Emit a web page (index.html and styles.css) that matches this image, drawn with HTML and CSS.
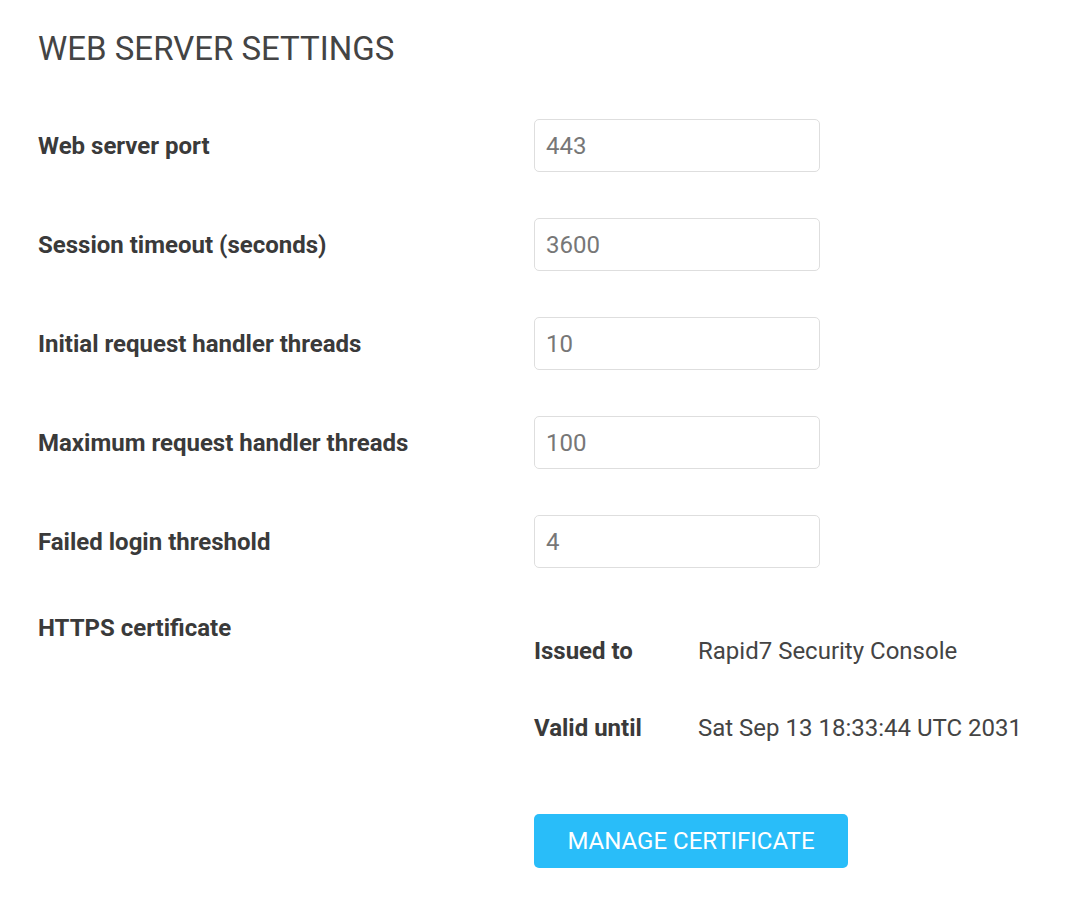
FILE: index.html
```html
<!DOCTYPE html>
<html>

<head>
    <meta charset="UTF-8">
    <title>Web Server Settings</title>
    <link rel="stylesheet" href="styles.css">
</head>

<body>
    <div class="settings">
        <h1 class="settings-title">WEB SERVER SETTINGS</h1>

        <div class="field-row">
            <label class="field-label" for="port">Web server port</label>
            <input class="field-input" id="port" type="text" value="443">
        </div>
        <div class="field-row">
            <label class="field-label" for="timeout">Session timeout (seconds)</label>
            <input class="field-input" id="timeout" type="text" value="3600">
        </div>
        <div class="field-row">
            <label class="field-label" for="initThreads">Initial request handler threads</label>
            <input class="field-input" id="initThreads" type="text" value="10">
        </div>
        <div class="field-row">
            <label class="field-label" for="maxThreads">Maximum request handler threads</label>
            <input class="field-input" id="maxThreads" type="text" value="100">
        </div>
        <div class="field-row">
            <label class="field-label" for="loginThreshold">Failed login threshold</label>
            <input class="field-input" id="loginThreshold" type="text" value="4">
        </div>

        <div class="cert-row">
            <div class="field-label">HTTPS certificate</div>
            <div class="cert-panel">
                <div class="cert-details">
                    <div class="cert-key">Issued to</div>
                    <div class="cert-value">Rapid7 Security Console</div>
                    <div class="cert-key">Valid until</div>
                    <div class="cert-value">Sat Sep 13 18:33:44 UTC 2031</div>
                </div>
                <button class="cert-button" type="button">MANAGE CERTIFICATE</button>
            </div>
        </div>
    </div>
</body>

</html>
```

FILE: styles.css
```css
body {
    margin: 0;
    padding: 0 38px;
    font-family: Roboto, "Liberation Sans", Arial, sans-serif;
    color: #333;
    background: #fff;
}

.settings {
    display: flex;
    flex-direction: column;
}

.settings-title {
    margin: 29px 0 50px;
    font-size: 33px;
    font-weight: 400;
    line-height: 40px;
    color: #444;
}

.field-row {
    display: flex;
    align-items: center;
    margin-bottom: 46px;
}

.field-label {
    width: 496px;
    font-size: 24px;
    font-weight: 700;
    line-height: 32px;
    color: #3a3a3a;
}

.field-input {
    box-sizing: border-box;
    width: 286px;
    height: 53px;
    padding: 0 11px;
    border: 1px solid #dedede;
    border-radius: 5px;
    font-family: inherit;
    font-size: 24px;
    color: #777;
    background: #fff;
    outline: none;
}

.cert-row {
    display: flex;
    align-items: flex-start;
}

.cert-row .field-label {
    line-height: 28px;
}

.cert-panel {
    display: flex;
    flex-direction: column;
    align-items: flex-start;
    padding-top: 21px;
}

.cert-details {
    display: grid;
    grid-template-columns: 164px auto;
    row-gap: 45px;
    font-size: 24px;
    line-height: 32px;
}

.cert-key {
    font-weight: 700;
    color: #3a3a3a;
}

.cert-value {
    color: #444;
}

.cert-button {
    margin-top: 70px;
    width: 314px;
    height: 54px;
    border: none;
    border-radius: 5px;
    background: #29bdf9;
    color: #fff;
    font-family: inherit;
    font-size: 24px;
    cursor: pointer;
}
```
